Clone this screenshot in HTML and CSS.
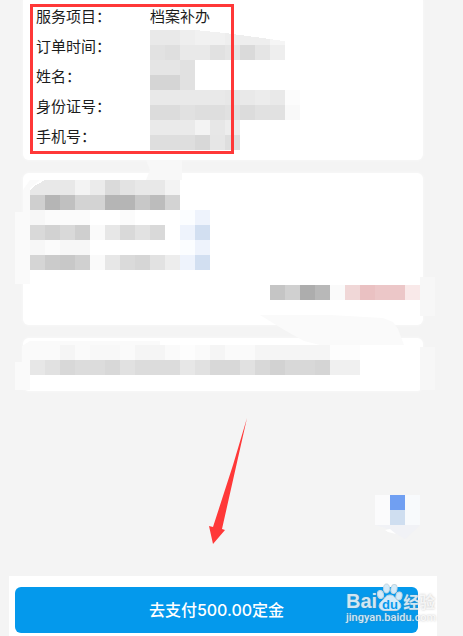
FILE: index.html
```html
<!DOCTYPE html>
<html lang="zh-CN">
<head>
<meta charset="utf-8">
<meta name="viewport" content="width=device-width, initial-scale=1">
<title>档案补办</title>
<link rel="stylesheet" href="styles.css">
</head>
<body>
<main class="page">
  <section class="card details">
    <dl class="fields">
      <dt>服务项目：</dt><dd>档案补办</dd>
      <dt>订单时间：</dt>
      <dd class="masked">
        <svg class="mosaic" width="150" height="120" viewBox="0 0 10 8" aria-hidden="true">
          <path fill="#e9e9e9" d="M0 0h2v1h-2z"/><path fill="#eee" d="M2 0h1v1h-1z"/><path fill="#f1f1f1" d="M3 0L5 .2V1H3z"/><path fill="#eee" d="M5 .2L8 .6V1H5z"/><path fill="#f5f5f5" d="M8 .6L9 .75V1H8z"/>
          <path fill="#e2e2e2" d="M0 1h1v1h-1z"/><path fill="#dfdfdf" d="M1 1h1v1h-1z"/><path fill="#e9e9e9" d="M2 1h2v1h-2z"/><path fill="#e1e1e1" d="M4 1h1v1h-1z"/><path fill="#e5e5e5" d="M5 1h1v1h-1zM7 1h1v1h-1z"/><path fill="#dadada" d="M6 1h1v1h-1z"/><path fill="#eee" d="M8 1h1v1h-1z"/>
          <path fill="#e5e5e5" d="M0 2h2v1h-2z"/><path fill="#e1e1e1" d="M2 2h1v2h-1z"/><path fill="#d5d5d5" d="M0 3h2v1h-2z"/>
          <path fill="#e9e9e9" d="M0 4h5v1h-5zM6 4h1v1h-1zM8 4h1v1h-1z"/><path fill="#e7e7e7" d="M5 4h1v1h-1z"/><path fill="#ececec" d="M7 4h1v1h-1z"/><path fill="#fcfcfc" d="M9 4h1v1h-1z"/>
          <path fill="#dcdcdc" d="M0 5h2v1h-2zM6 5h1v1h-1z"/><path fill="#e1e1e1" d="M2 5h1v1h-1zM5 5h1v1h-1zM7 5h2v1h-2z"/><path fill="#dedede" d="M3 5h2v1h-2z"/><path fill="#f9f9f9" d="M9 5h1v1h-1z"/>
          <path fill="#eaeaea" d="M0 6h3v1h-3z"/><path fill="#f3f3f3" d="M3 6h1v1h-1z"/><path fill="#e7e7e7" d="M4 6h1v1h-1z"/><path fill="#ededed" d="M5 6h1v1h-1z"/>
          <path fill="#dedede" d="M0 7h3v1h-3zM5 7h1v1h-1z"/><path fill="#d8d8d8" d="M3 7h1v1h-1z"/><path fill="#e6e6e6" d="M4 7h1v1h-1z"/>
        </svg>
      </dd>
      <dt>姓名：</dt>
      <dt>身份证号：</dt>
      <dt>手机号：</dt>
    </dl>
  </section>

  <section class="card order">
    <svg class="mosaic" width="180" height="90" viewBox="0 0 12 6" aria-hidden="true">
      <path fill="#e8e8e8" d="M0 .7L.3 .4L1 0H3V1H0zM8 0h1v1h-1z"/><path fill="#f3f3f3" d="M3 0h1v1h-1zM9 0h1v1h-1z"/><path fill="#ebebeb" d="M4 0h1v1h-1z"/><path fill="#dadada" d="M5 0h1v1h-1z"/><path fill="#e3e3e3" d="M6 0h1v1h-1z"/><path fill="#e8e8e8" d="M7 0h1v1h-1z"/>
      <path fill="#cfcfcf" d="M0 1h1v1h-1z"/><path fill="#b5b5b5" d="M1 1h1v1h-1zM5 1h2v1h-2z"/><path fill="#c0c0c0" d="M2 1h1v1h-1z"/><path fill="#d3d3d3" d="M3 1h2v1h-2zM9 1h1v1h-1z"/><path fill="#c8c8c8" d="M7 1h1v1h-1z"/><path fill="#bcbcbc" d="M8 1h1v1h-1z"/>
      <path fill="#f7f7f7" d="M0 2h1v1h-1zM0 4h1v1h-1zM2 4h2v1h-2z"/><path fill="#fbfbfb" d="M1 2h3v1h-3zM1 4h1v1h-1zM6 2h1v1h-1z"/>
      <path fill="#d9d9d9" d="M0 3h1v1h-1zM2 3h1v1h-1zM6 3h1v1h-1zM8 3h1v1h-1z"/><path fill="#d2d2d2" d="M1 3h1v1h-1z"/><path fill="#cfcfcf" d="M3 3h1v1h-1z"/><path fill="#fafafa" d="M4 3h1v1h-1zM4 5h1v1h-1z"/><path fill="#e7e7e7" d="M5 3h1v1h-1zM5 5h1v1h-1z"/><path fill="#e2e2e2" d="M7 3h1v1h-1zM8 5h1v1h-1z"/>
      <path fill="#d5d5d5" d="M0 5h1v1h-1z"/><path fill="#cbcbcb" d="M1 5h1v1h-1z"/><path fill="#c8c8c8" d="M2 5h1v1h-1z"/><path fill="#d0d0d0" d="M3 5h1v1h-1z"/><path fill="#dadada" d="M6 5h1v1h-1z"/><path fill="#d6d6d6" d="M7 5h1v1h-1z"/><path fill="#ededed" d="M9 5h1v1h-1z"/>
      <path fill="#fbfdff" d="M10 2h1v1h-1zM10 4h1v1h-1z"/><path fill="#eef3fc" d="M11 2h1v1h-1zM10 3h1v1h-1zM11 4h1v1h-1zM10 5h1v1h-1z"/><path fill="#d2dff1" d="M11 3h1v1h-1zM11 5h1v1h-1z"/>
    </svg>
    <svg class="mosaic total" width="150" height="15" viewBox="0 0 10 1" aria-hidden="true">
      <path fill="#c5c5c5" d="M0 0h1v1h-1z"/><path fill="#d0d0d0" d="M1 0h1v1h-1z"/><path fill="#adadad" d="M2 0h1v1h-1z"/><path fill="#b8b8b8" d="M3 0h1v1h-1z"/><path fill="#fafafa" d="M4 0h1v1h-1z"/><path fill="#f0d7d7" d="M5 0h1v1h-1z"/><path fill="#eac1c2" d="M6 0h1v1h-1z"/><path fill="#ecc7c8" d="M7 0h2v1h-2z"/><path fill="#f9e9e9" d="M9 0h1v1h-1z"/>
    </svg>
  </section>

  <section class="card note">
    <svg class="mosaic" width="330" height="30" viewBox="0 0 22 2" aria-hidden="true">
      <path fill="#fafafa" d="M0 0h22v1h-22z"/><path fill="#f5f5f5" d="M2 0h1v1h-1zM7 0h2v1h-2zM12 0h1v1h-1zM15 0h5v1h-5z"/><path fill="#f8f8f8" d="M4 0h2v1h-2z"/><path fill="#fdfdfd" d="M10 0h1v1h-1zM20 0h2v1h-2z"/>
      <path fill="#e7e7e7" d="M0 1h1v1h-1zM10 1h1v1h-1z"/><path fill="#e1e1e1" d="M1 1h1v1h-1zM6 1h1v1h-1zM11 1h1v1h-1zM14 1h1v1h-1z"/><path fill="#d8d8d8" d="M2 1h1v1h-1zM5 1h1v1h-1zM12 1h2v1h-2zM15 1h1v1h-1zM17 1h2v1h-2z"/><path fill="#dcdcdc" d="M3 1h2v1h-2zM7 1h3v1h-3z"/><path fill="#d2d2d2" d="M16 1h1v1h-1z"/><path fill="#d5d5d5" d="M19 1h1v1h-1z"/><path fill="#f0f0f0" d="M20 1h2v1h-2z"/>
    </svg>
  </section>
</main>

<footer class="paybar">
  <button class="pay" type="button">去支付500.00定金</button>
</footer>

<svg class="smudges" width="463" height="420" viewBox="0 0 463 420" aria-hidden="true">
  <path fill="#f8f8f8" d="M146 160h36v20h-36l4-10z"/>
  <path fill="#fafafa" d="M15 212h15v72H15zM30 180h10l-10 8v24h-7v-22zM15 362h15v28H15zM22 346l8-5h130v4H30v17h-8z"/>
  <path fill="#f7f7f7" d="M420 277h15v39h-15zM420 347h15v43h-15z"/>
  <path fill="#fafafa" d="M260 315l26 16 18 10 16 4h84l-6-16-5-7-10-4-53-3z"/>
</svg>
<svg class="contact" width="45" height="45" viewBox="0 0 45 45" aria-hidden="true">
  <path fill="#fbfbfc" d="M0 0h15v30H0z"/><path fill="#f8fafc" d="M30 0h15v30H30z"/><path fill="#709ff2" d="M15 0h15v15H15z"/><path fill="#cfdef0" d="M15 15h15v15H15z"/>
  <path fill="#f1f2f6" d="M0 30h45l-6 6-9 8-10-6-10-5z"/><path fill="#fff" d="M10 35l5-1 6 5-8-2z"/>
</svg>
<div class="frame"></div>
<svg class="arrow" width="50" height="130" viewBox="0 0 50 130" aria-hidden="true">
  <path fill="#ff3838" d="M47 1L22 112L25 113L13 127L9 109L13 110L33 48z"/>
</svg>
<div class="watermark">
  <div class="brand">
    <span class="bai">Bai</span>
    <svg class="paw" width="26" height="28" viewBox="0 0 26 28" aria-hidden="true">
      <ellipse cx="9.500" cy="5.500" rx="3" ry="4.500"/><ellipse cx="17" cy="6" rx="3" ry="4.500" transform="rotate(10 17 6)"/>
      <ellipse cx="3.500" cy="11.500" rx="3" ry="4" transform="rotate(-12 3.500 11.500)"/><ellipse cx="22" cy="13" rx="3" ry="4" transform="rotate(12 22 13)"/>
      <path d="M13 12c4 0 5 3 8 6 5 4 3 9.500-3 9.500H8c-6 0-8-5.500-3-9.500 3-3 4-6 8-6z"/>
      <text x="13" y="26">du</text>
    </svg>
    <span class="jy">经验</span>
  </div>
  <div class="site">jingyan.baidu.com</div>
</div>
</body>
</html>
```
FILE: styles.css
```css
* {
  box-sizing: border-box;
}

body {
  margin: 0;
  min-height: 100vh;
  display: flex;
  flex-direction: column;
  position: relative;
  overflow: hidden;
  background: #f4f4f4;
  color: #1c1c1c;
  font: 15px/28px "Noto Sans CJK SC", sans-serif;
}

.page {
  flex: 1;
  display: flex;
  flex-direction: column;
  gap: 13px;
  padding: 0 40px 0 23px;
}

.card {
  background: #fff;
  border-radius: 6px;
  box-shadow: 0 0 3px #fafafa;
}

.details {
  padding: 0 7px 10px 13px;
  border-radius: 0 0 6px 6px;
}

.fields {
  margin: 0;
  display: grid;
  grid-template-columns: 114px 1fr;
  grid-auto-rows: 30px;
}

.fields dt {
  grid-column: 1;
  padding-top: 2px;
}

.fields dd {
  margin: 0;
  padding-top: 2px;
}

.fields .masked {
  grid-row: 2 / span 4;
  grid-column: 2;
  padding: 0;
}

.mosaic {
  display: block;
  shape-rendering: crispEdges;
}

.order {
  display: flex;
  flex-direction: column;
  gap: 15px;
  padding: 7px 3px 25px 7px;
}

.total {
  align-self: flex-end;
}

.note {
  padding: 7px 7px 16px;
}

.paybar {
  margin: 0 26px 0 9px;
  padding: 11px 19px 3px 6px;
  background: #fff;
}

.pay {
  display: block;
  width: 100%;
  height: 46px;
  padding: 0;
  border: 0;
  border-radius: 6px;
  background: #0499ec;
  color: #fff;
  font: 500 16px/46px Inter, "Noto Sans CJK SC", sans-serif;
}

.smudges,
.frame,
.arrow,
.contact,
.watermark {
  position: absolute;
  pointer-events: none;
}

.smudges {
  left: 0;
  top: 0;
}

.frame {
  left: 30px;
  top: 4px;
  width: 204px;
  height: 150px;
  border: 3px solid #ff3838;
}

.arrow {
  left: 200px;
  top: 417px;
}

.contact {
  left: 375px;
  top: 495px;
}

.watermark {
  left: 346px;
  top: 582px;
  color: rgba(255, 255, 255, 0.8);
  text-shadow: 0 0 2px rgba(130, 130, 130, 0.5);
  font-family: Roboto, sans-serif;
}

.brand {
  display: flex;
  align-items: flex-end;
  height: 29px;
}

.bai {
  font: 700 20px/20px "Liberation Sans", sans-serif;
}

.paw {
  fill: #d3ebfa;
  stroke: #c3d5e0;
  stroke-width: 1;
}

.paw text {
  fill: #0499ec;
  stroke: none;
  font: 700 13px "Liberation Sans", sans-serif;
  text-anchor: middle;
  text-shadow: none;
}

.jy {
  font: 700 16px/20px "Noto Sans CJK SC", sans-serif;
}

.site {
  font-size: 11px;
  font-weight: 500;
  line-height: 14px;
}
```
